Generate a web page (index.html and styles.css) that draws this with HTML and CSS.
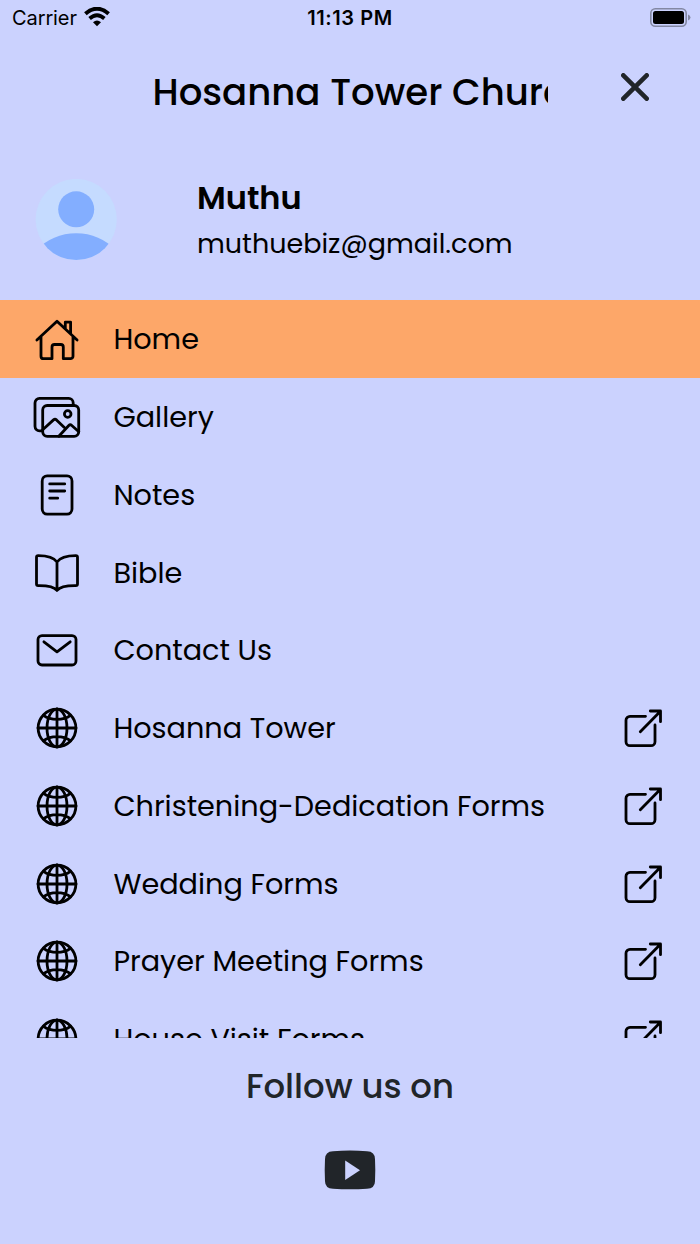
FILE: index.html
```html
<!DOCTYPE html>
<html lang="en">
<head>
  <meta charset="UTF-8">
  <title>Hosanna Tower Church</title>
  <link rel="stylesheet" href="styles.css">
</head>
<body>

<!-- Shared icons -->
<svg class="sprite" width="0" height="0">
  <symbol id="globe" viewBox="0 0 48 48">
    <circle cx="24" cy="24" r="18.9"/>
    <ellipse cx="24" cy="24" rx="10" ry="18.9"/>
    <path d="M24 5v38M5 24h38M10.5 11.3Q16 15.4 24 15.4T37.5 11.3M10.5 36.7Q16 32.6 24 32.6T37.5 36.7"/>
  </symbol>
  <symbol id="external" viewBox="0 0 48 48">
    <path d="M26.5 12.3H11a4 4 0 0 0-4 4v21.4a4 4 0 0 0 4 4h21a4 4 0 0 0 4-4V21"/>
    <path d="M21.3 27.8L41.2 7.5M31.3 7H41.500v10.700"/>
  </symbol>
</svg>

<div class="screen">
  <div class="status-bar">
    <div class="carrier">
      <span class="carrier-name">Carrier</span>
      <svg class="wifi" viewBox="0 0 26 20">
        <path d="M1.4 6.7Q13-3.2 24.6 6.7" stroke-width="4"/>
        <path d="M5.6 11.5q7.4-6.6 14.8 0" stroke-width="3.7"/>
        <path class="dot" d="M9 15.2q4-3.4 8 0l-4 4z"/>
      </svg>
    </div>
    <div class="time">11:13 PM</div>
    <svg class="battery" viewBox="0 0 42 20">
      <rect class="shell" x=".8" y=".8" width="35.4" height="17.4" rx="4.5"/>
      <rect x="3" y="3" width="31" height="13" rx="2.5"/>
      <path class="tip" d="M38 6.5q2.5 1 2.5 3t-2.5 3z"/>
    </svg>
  </div>

  <div class="header">
    <div class="title">Hosanna Tower Church</div>
    <svg class="close" viewBox="0 0 28 28"><path d="M2.3 2.3l23.4 23.4M25.7 2.3L2.3 25.7"/></svg>
  </div>

  <div class="profile">
    <svg class="avatar" viewBox="0 0 82 82">
      <clipPath id="round"><circle cx="41.2" cy="40.5" r="40.6"/></clipPath>
      <circle class="avatar-bg" cx="41.2" cy="40.5" r="40.6"/>
      <circle cx="41.2" cy="30.3" r="18"/>
      <path clip-path="url(#round)" d="M0 72Q18 54.3 41.200 54.3T82 72V82H0z"/>
    </svg>
    <div class="user">
      <div class="user-name">Muthu</div>
      <div class="user-email">muthuebiz@gmail.com</div>
    </div>
  </div>

  <div class="menu">
    <div class="item active">
      <svg class="icon" viewBox="0 0 48 48">
        <path d="M3.9 25L24 6.2 44.1 25M8 21.800v19.400a2.500 2.500 0 0 0 2.500 2.500H19V32a2.500 2.500 0 0 1 2.500-2.500h6.300a2.500 2.500 0 0 1 2.500 2.500v11.700h7.200a2.500 2.500 0 0 0 2.500-2.500V21.800M32.300 13.200V7.100h5.300v11.200"/>
      </svg>
      <span class="label">Home</span>
    </div>
    <div class="item">
      <svg class="icon" viewBox="0 0 48 48">
        <rect x="9.7" y="12.5" width="36" height="30.8" rx="4.5"/>
        <path d="M9.7 37.8H6.5A4.5 4.5 0 0 1 2 33.3V9.9a4.5 4.5 0 0 1 4.5-4.5h29.2a4.5 4.5 0 0 1 4.5 4.5v2.6"/>
        <circle cx="34.7" cy="21" r="3.3"/>
        <path d="M9.7 36.8L20.5 26.9q1.5-1.3 3 0l7.8 7.6M25.8 43.3l10-10.8q1.4-1.4 3 0l7 6.2"/>
      </svg>
      <span class="label">Gallery</span>
    </div>
    <div class="item">
      <svg class="icon" viewBox="0 0 48 48">
        <rect x="9.2" y="4.9" width="29.8" height="38.2" rx="5"/>
        <path d="M16.7 12.9h15M16.7 20h15M16.7 27.2h8"/>
      </svg>
      <span class="label">Notes</span>
    </div>
    <div class="item">
      <svg class="icon" viewBox="0 0 48 48">
        <path d="M24 13Q19.5 6.6 5.2 6.6q-1.7 0-1.7 1.7V35q0 1.6 1.7 1.6Q20 36.4 24 41.4q4-5 18.8-4.8 1.7 0 1.7-1.6V8.3q0-1.7-1.7-1.7Q28.5 6.6 24 13zV41"/>
      </svg>
      <span class="label">Bible</span>
    </div>
    <div class="item">
      <svg class="icon" viewBox="0 0 48 48">
        <rect x="5" y="9.6" width="38" height="29.4" rx="4"/>
        <path d="M10.9 15.8L24 25.9l13.2-10.1"/>
      </svg>
      <span class="label">Contact Us</span>
    </div>
    <div class="item">
      <svg class="icon"><use href="#globe"/></svg>
      <span class="label">Hosanna Tower</span>
      <svg class="icon open"><use href="#external"/></svg>
    </div>
    <div class="item">
      <svg class="icon"><use href="#globe"/></svg>
      <span class="label">Christening-Dedication Forms</span>
      <svg class="icon open"><use href="#external"/></svg>
    </div>
    <div class="item">
      <svg class="icon"><use href="#globe"/></svg>
      <span class="label">Wedding Forms</span>
      <svg class="icon open"><use href="#external"/></svg>
    </div>
    <div class="item">
      <svg class="icon"><use href="#globe"/></svg>
      <span class="label">Prayer Meeting Forms</span>
      <svg class="icon open"><use href="#external"/></svg>
    </div>
    <div class="item">
      <svg class="icon"><use href="#globe"/></svg>
      <span class="label">House Visit Forms</span>
      <svg class="icon open"><use href="#external"/></svg>
    </div>
  </div>

  <div class="footer">
    <div class="follow">Follow us on</div>
    <svg class="youtube" viewBox="0 0 52 40">
      <path d="M9 1.2Q26 0 43 1.2q8 .3 8 8 .6 11 0 22 0 7-8 7.6-17 1-34 0-8-.6-8-7.6-.6-11 0-22 0-7.7 8-8z"/>
      <path class="play" d="M21.2 10.5L36 20.2 21.2 30z"/>
    </svg>
  </div>
</div>

</body>
</html>
```
FILE: styles.css
```css
* {
  margin: 0;
  padding: 0;
  box-sizing: border-box;
}

body {
  background: #cbd2fe;
  color: #000;
  font-family: Poppins, Inter, sans-serif;
}

.sprite {
  display: block;
}

.screen {
  width: 700px;
  height: 1244px;
  display: flex;
  flex-direction: column;
  overflow: hidden;
}

/* Status bar */
.status-bar {
  height: 36px;
  padding: 0 9px 0 12px;
  display: grid;
  grid-template-columns: 1fr auto 1fr;
  align-items: center;
  font-family: Inter, sans-serif;
  font-size: 20px;
}

.carrier {
  display: flex;
  align-items: center;
  gap: 7px;
}

.carrier-name {
  letter-spacing: -0.1px;
}

.wifi {
  width: 26px;
  height: 20px;
  margin-top: -2px;
  fill: none;
  stroke: #000;
}

.wifi .dot {
  fill: #000;
  stroke: none;
}

.time {
  margin-right: 3px;
  font-weight: 600;
  letter-spacing: 0.6px;
}

.battery {
  width: 42px;
  height: 20px;
  margin-right: -1px;
  justify-self: end;
}

.battery .shell {
  fill: none;
  stroke: #8388a3;
  stroke-width: 1.6;
}

.battery .tip {
  fill: #8388a3;
}

/* Header */
.header {
  height: 110px;
  padding: 0 51px 0 152.5px;
  display: flex;
  align-items: center;
  justify-content: space-between;
}

.title {
  width: 395px;
  padding-top: 1px;
  overflow: hidden;
  white-space: nowrap;
  font-size: 37.1px;
  font-weight: 500;
  line-height: 50px;
}

.close {
  width: 28px;
  height: 28px;
  margin-bottom: 8px;
  fill: none;
  stroke: #212529;
  stroke-width: 4.6;
  stroke-linecap: round;
}

/* Profile */
.profile {
  height: 154.4px;
  padding: 33px 35px 0;
  display: flex;
  gap: 80px;
}

.avatar {
  width: 82px;
  height: 82px;
  fill: #83aeff;
}

.avatar-bg {
  fill: #c5dbff;
}

.user-name {
  font-size: 32px;
  font-weight: 600;
  line-height: 38px;
}

.user-email {
  margin-top: 8px;
  font-size: 27px;
  line-height: 38px;
}

/* Menu */
.menu {
  height: 737.6px;
  overflow: hidden;
}

.item {
  height: 77.75px;
  padding: 0 33px;
  display: flex;
  align-items: center;
}

.active {
  background: #fda769;
}

.icon {
  width: 48px;
  height: 48px;
  flex: none;
  fill: none;
  stroke: #000;
  stroke-width: 2.8;
  stroke-linecap: round;
  stroke-linejoin: round;
}

.open {
  margin-left: auto;
}

.label {
  margin-left: 32.4px;
  padding-top: 1px;
  font-size: 28.7px;
  white-space: nowrap;
}

/* Footer */
.footer {
  display: flex;
  flex-direction: column;
  align-items: center;
  color: #212529;
}

.follow {
  margin-top: 25px;
  font-size: 33.9px;
  font-weight: 500;
  line-height: 46px;
}

.youtube {
  width: 52px;
  height: 40px;
  margin-top: 41px;
  fill: #212529;
}

.youtube .play {
  fill: #cbd2fe;
}
```
